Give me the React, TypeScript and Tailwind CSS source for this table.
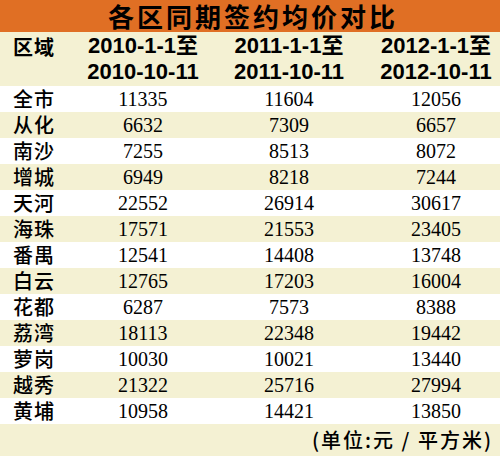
const rows: [string, number, number, number][] = [
  ["全市", 11335, 11604, 12056],
  ["从化", 6632, 7309, 6657],
  ["南沙", 7255, 8513, 8072],
  ["增城", 6949, 8218, 7244],
  ["天河", 22552, 26914, 30617],
  ["海珠", 17571, 21553, 23405],
  ["番禺", 12541, 14408, 13748],
  ["白云", 12765, 17203, 16004],
  ["花都", 6287, 7573, 8388],
  ["荔湾", 18113, 22348, 19442],
  ["萝岗", 10030, 10021, 13440],
  ["越秀", 21322, 25716, 27994],
  ["黄埔", 10958, 14421, 13850],
]

const cjk = "font-['Noto_Sans_CJK_SC',sans-serif]"

export default function App() {
  return (
    <div className="w-[500px] h-[456px] overflow-hidden bg-[#f4f1d3] text-black">
      <div className={`h-[32px] bg-[#e06f24] flex items-center justify-center pl-[6px] text-[26px] font-bold tracking-[3px] leading-[32px] ${cjk}`}>
        各区同期签约均价对比
      </div>

      <div className="h-[54px] grid grid-cols-[70px_146px_146px_138px] items-center">
        <div className={`self-start pt-[2px] pl-[13px] text-[20px] font-bold tracking-[1px] leading-[26px] ${cjk}`}>区域</div>
        {["2010", "2011", "2012"].map((y, i) => (
          <div
            key={y}
            className={`flex flex-col items-center text-[22px] font-bold leading-[26px] font-['Liberation_Sans','Noto_Sans_CJK_SC',sans-serif] ${i === 2 ? "pl-[10px]" : ""}`}
          >
            <span>{y}-1-1至</span>
            <span>{y}-10-11</span>
          </div>
        ))}
      </div>

      {rows.map(([name, a, b, c], idx) => (
        <div
          key={name}
          className={`h-[26px] grid grid-cols-[70px_146px_146px_138px] items-center ${idx % 2 === 0 ? "bg-white" : "bg-[#f4f1d3]"}`}
        >
          <div className={`pl-[13px] text-[20px] font-medium tracking-[1px] leading-[26px] ${cjk}`}>{name}</div>
          <div className="text-center text-[20px] leading-[26px] font-['Liberation_Serif',serif]">{a}</div>
          <div className="text-center text-[20px] leading-[26px] font-['Liberation_Serif',serif]">{b}</div>
          <div className="text-center pl-[10px] text-[20px] leading-[26px] font-['Liberation_Serif',serif]">{c}</div>
        </div>
      ))}

      <div className={`h-[32px] flex items-center justify-end pr-[7px] text-[20px] font-medium tracking-[2px] leading-[32px] ${cjk}`}>
        (单位:元 / 平方米)
      </div>
    </div>
  )
}
